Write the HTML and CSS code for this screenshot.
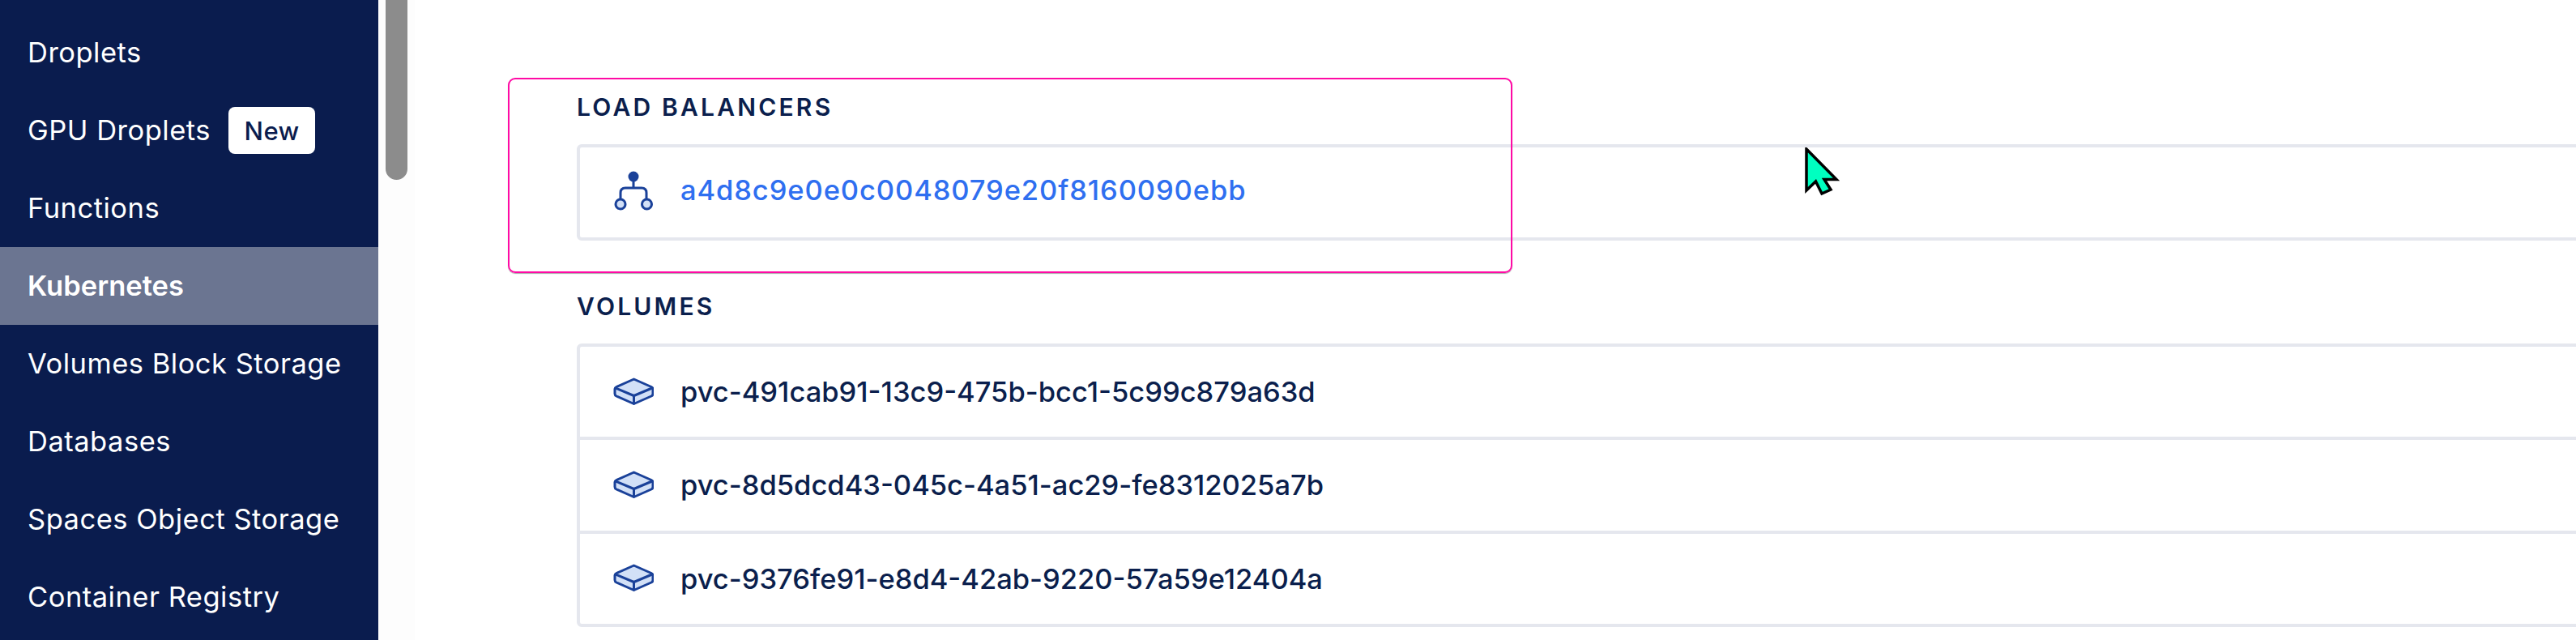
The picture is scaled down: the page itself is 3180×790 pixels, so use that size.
FILE: index.html
```html
<!DOCTYPE html>
<html lang="en">
<head>
<meta charset="utf-8">
<title>Kubernetes cluster resources</title>
<link rel="stylesheet" href="styles.css">
</head>
<body>
<div class="app">
  <nav class="sidebar">
    <a class="nav-item">Droplets</a>
    <a class="nav-item">GPU Droplets <span class="badge">New</span></a>
    <a class="nav-item">Functions</a>
    <a class="nav-item active">Kubernetes</a>
    <a class="nav-item">Volumes Block Storage</a>
    <a class="nav-item">Databases</a>
    <a class="nav-item">Spaces Object Storage</a>
    <a class="nav-item">Container Registry</a>
  </nav>
  <div class="track"><div class="thumb"></div></div>
  <main class="content">
    <section class="section">
      <h2 class="label">LOAD BALANCERS</h2>
      <div class="list">
        <div class="row lb">
          <svg class="icon" width="50" height="50" viewBox="0 0 50 50" aria-hidden="true">
            <path class="line" d="M25 12V21M9 34V27Q9 21 15 21H35Q41 21 41 27V34"/>
            <circle class="dot" cx="25" cy="7" r="6.500"/>
            <circle class="node" cx="9" cy="41" r="6"/>
            <circle class="node" cx="41.500" cy="41" r="6"/>
          </svg>
          <a class="link">a4d8c9e0e0c0048079e20f8160090ebb</a>
        </div>
      </div>
    </section>
    <section class="section">
      <h2 class="label">VOLUMES</h2>
      <div class="list">
        <div class="row">
          <svg class="icon vol" width="50" height="34" viewBox="0 0 50 34" aria-hidden="true">
            <path class="box" d="M25.500 2L47 11.500Q49 12.500 49 14V20Q49 22 47 23L25.500 32.500L4 23Q2 22 2 20V14Q2 12.500 4 11.500Z"/>
            <path class="line" d="M3 13L25.500 22.500L48 13M25.500 22.500V32"/>
          </svg>
          <span class="name">pvc-491cab91-13c9-475b-bcc1-5c99c879a63d</span>
        </div>
        <div class="row">
          <svg class="icon vol" width="50" height="34" viewBox="0 0 50 34" aria-hidden="true">
            <path class="box" d="M25.500 2L47 11.500Q49 12.500 49 14V20Q49 22 47 23L25.500 32.500L4 23Q2 22 2 20V14Q2 12.500 4 11.500Z"/>
            <path class="line" d="M3 13L25.500 22.500L48 13M25.500 22.500V32"/>
          </svg>
          <span class="name">pvc-8d5dcd43-045c-4a51-ac29-fe8312025a7b</span>
        </div>
        <div class="row">
          <svg class="icon vol" width="50" height="34" viewBox="0 0 50 34" aria-hidden="true">
            <path class="box" d="M25.500 2L47 11.500Q49 12.500 49 14V20Q49 22 47 23L25.500 32.500L4 23Q2 22 2 20V14Q2 12.500 4 11.500Z"/>
            <path class="line" d="M3 13L25.500 22.500L48 13M25.500 22.500V32"/>
          </svg>
          <span class="name">pvc-9376fe91-e8d4-42ab-9220-57a59e12404a</span>
        </div>
      </div>
    </section>
  </main>
</div>
<div class="highlight"></div>
<svg class="cursor" width="44" height="60" viewBox="0 0 44 60" aria-hidden="true">
  <path d="M2 2V53L13.500 42L21 57L32 52L24 39.500H39Z"/>
</svg>
</body>
</html>
```

FILE: styles.css
```css
* { box-sizing: border-box; }
html, body { margin: 0; height: 790px; overflow: hidden; background: #fff; }
body { font-family: Inter, "Liberation Sans", sans-serif; color: #0b1f4d; }

.app { display: flex; height: 790px; }

.sidebar {
  flex: 0 0 467px;
  background: #0a1c4e;
  padding-top: 17px;
  overflow: hidden;
}
.nav-item {
  display: flex;
  align-items: center;
  height: 96px;
  padding-left: 34px;
  padding-bottom: 2px;
  color: #fff;
  font-size: 34.500px;
  letter-spacing: 0.5px;
  white-space: pre;
}
.nav-item.active { background: #6b7591; font-weight: 600; letter-spacing: 0; }
.badge {
  display: flex;
  align-items: center;
  justify-content: center;
  width: 107px;
  height: 58px;
  margin-left: 12px;
  margin-top: 2px;
  border-radius: 8px;
  background: #fff;
  color: #0a1c4e;
  font-size: 31px;
  font-weight: 500;
}

.track { flex: 0 0 45px; background: #fdfdfd; padding-left: 9px; }
.thumb { width: 27px; height: 222px; background: #8c8c8c; border-radius: 0 0 14px 14px; }

.content { flex: 1; min-width: 0; overflow: hidden; padding: 112px 0 0 200px; }
.section { margin-bottom: 61px; }
.label {
  margin: 0 0 26px;
  height: 40px;
  line-height: 40px;
  font-size: 30px;
  font-weight: 600;
  letter-spacing: 3.200px;
}
.list {
  width: 2600px;
  border: 4px solid #e5e7ee;
  border-radius: 6px;
}
.row {
  display: flex;
  align-items: center;
  height: 111px;
  padding-left: 41px;
  font-size: 34.500px;
  font-weight: 500;
}
.row.lb { padding-bottom: 4px; }
.list .row + .row { border-top: 4px solid #e5e7ee; height: 115.670px; }
.icon { flex: none; margin-right: 33px; }
.vol { margin-top: -2px; }
.name { color: #0b1f4d; }
.link { color: #2f6ff0; letter-spacing: 0.9px; margin-bottom: 2px; }

.line { fill: none; stroke: #1a4199; stroke-width: 3; stroke-linejoin: round; stroke-linecap: round; }
.dot { fill: #1a4199; }
.node, .box { fill: #d2e0f7; stroke: #1a4199; stroke-width: 3; stroke-linejoin: round; }

.highlight {
  position: absolute;
  left: 627px;
  top: 96px;
  width: 1240px;
  height: 241px;
  border: 2px solid #ff0aa5;
  border-radius: 9px;
  box-shadow: 0 1px 1px rgba(0, 0, 0, .35);
}
.cursor { position: absolute; left: 2228px; top: 182px; }
.cursor path { fill: #00ffc0; stroke: #000; stroke-width: 3.500; stroke-linejoin: miter; }
```
